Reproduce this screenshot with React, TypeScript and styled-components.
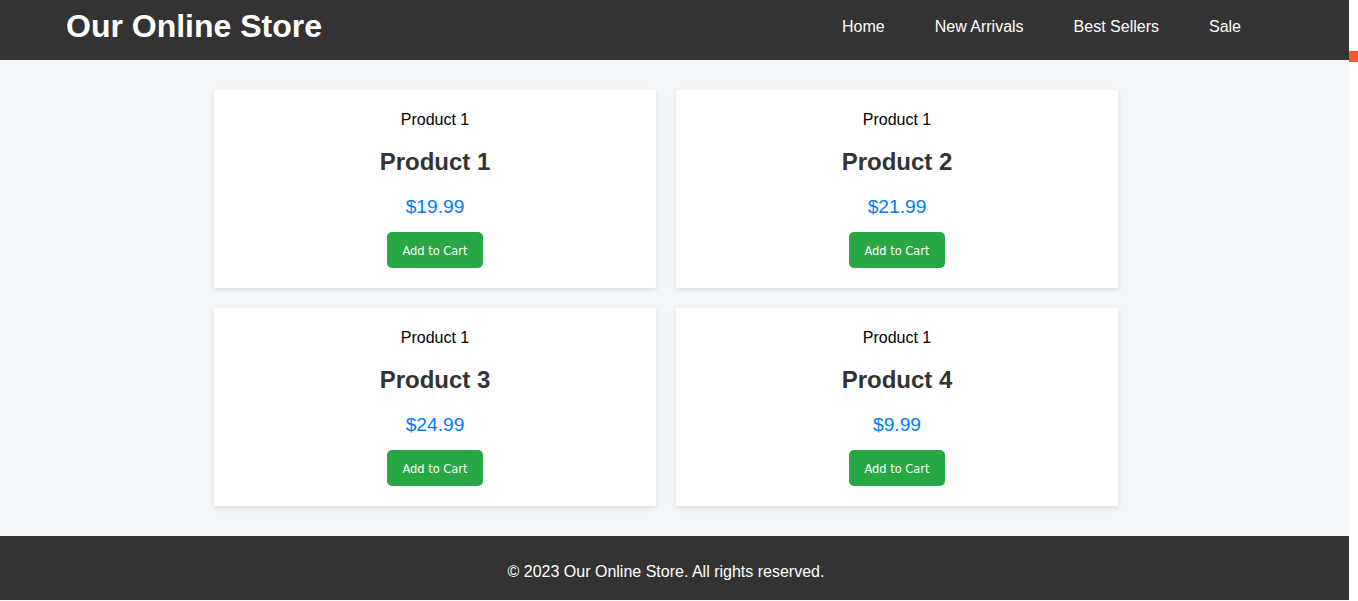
import React from 'react';
import styled, { createGlobalStyle } from 'styled-components';

type Product = {
  id: number;
  name: string;
  price: string;
};

const products: Product[] = [
  { id: 1, name: 'Product 1', price: '$19.99' },
  { id: 2, name: 'Product 2', price: '$21.99' },
  { id: 3, name: 'Product 3', price: '$24.99' },
  { id: 4, name: 'Product 4', price: '$9.99' },
];

const navLinks = ['Home', 'New Arrivals', 'Best Sellers', 'Sale'];

const App = () => (
  <>
    <GlobalStyle />
    <Shell>
      <Page>
        <Header>
          <HeaderInner>
            <Logo>Our Online Store</Logo>
            <Nav>
              {navLinks.map((link) => (
                <NavLink key={link} href="#">
                  {link}
                </NavLink>
              ))}
            </Nav>
          </HeaderInner>
        </Header>
        <Main>
          <Grid>
            {products.map((product) => (
              <Card key={product.id}>
                {/* image alt text shows where the picture would be */}
                <ImageAlt>Product 1</ImageAlt>
                <Title>{product.name}</Title>
                <Price>{product.price}</Price>
                <CartButton type="button">Add to Cart</CartButton>
              </Card>
            ))}
          </Grid>
        </Main>
        <Footer>© 2023 Our Online Store. All rights reserved.</Footer>
      </Page>
      <SideStrip>
        <Marker />
      </SideStrip>
    </Shell>
  </>
);

export default App;

const GlobalStyle = createGlobalStyle`
  html, body {
    margin: 0;
    padding: 0;
    overflow: hidden;
    background: #ffffff;
    font-family: "Liberation Sans", Arial, sans-serif;
  }
  * {
    box-sizing: border-box;
  }
`;

const Shell = styled.div`
  display: flex;
  min-height: 100vh;
`;

const Page = styled.div`
  flex: 1;
  display: flex;
  flex-direction: column;
  background: #f4f7fa;
`;

const SideStrip = styled.div`
  width: 9px;
  flex-shrink: 0;
  background: #ffffff;
  display: flex;
  flex-direction: column;
`;

const Marker = styled.div`
  margin-top: 51px;
  height: 11px;
  background: #f15a2b;
`;

const Header = styled.header`
  background: #333333;
  height: 60px;
`;

const HeaderInner = styled.div`
  box-sizing: content-box;
  width: 1200px;
  height: 52px;
  padding-right: 17px;
  margin: 0 auto;
  display: flex;
  align-items: center;
  justify-content: space-between;
`;

const Logo = styled.h1`
  margin: 0;
  font-size: 32px;
  font-weight: bold;
  color: #ffffff;
`;

const Nav = styled.nav`
  display: flex;
  align-items: center;
  padding-top: 2px;
`;

const NavLink = styled.a`
  margin: 0 25px;
  font-size: 16px;
  color: #ffffff;
  text-decoration: none;
`;

const Main = styled.main`
  padding: 30px 0;
`;

const Grid = styled.div`
  box-sizing: content-box;
  width: 904px;
  padding-right: 17px;
  margin: 0 auto;
  display: grid;
  grid-template-columns: repeat(2, 442px);
  gap: 20px;
`;

const Card = styled.div`
  background: #ffffff;
  height: 198px;
  padding: 20px;
  text-align: center;
  box-shadow: 0 2px 5px rgba(0, 0, 0, 0.1);
  display: flex;
  flex-direction: column;
  align-items: center;
`;

const ImageAlt = styled.div`
  padding-top: 1px;
  font-size: 16px;
  line-height: 18px;
  color: #000000;
`;

const Title = styled.h2`
  margin: 19px 0 0;
  font-size: 24px;
  font-weight: bold;
  color: #333333;
`;

const Price = styled.p`
  margin: 20px 0 0;
  font-size: 19.2px;
  color: #007bff;
`;

const CartButton = styled.button`
  margin-top: 14px;
  height: 36px;
  padding: 0 15.5px;
  border: none;
  border-radius: 5px;
  background: #28a745;
  color: #ffffff;
  font-family: Tahoma, "DejaVu Sans Condensed", "DejaVu Sans", sans-serif;
  font-size: 12.7px;
  cursor: pointer;
`;

const Footer = styled.footer`
  background: #333333;
  color: #ffffff;
  text-align: center;
  font-size: 16px;
  padding: 27px 17px 19px 0;
`;
